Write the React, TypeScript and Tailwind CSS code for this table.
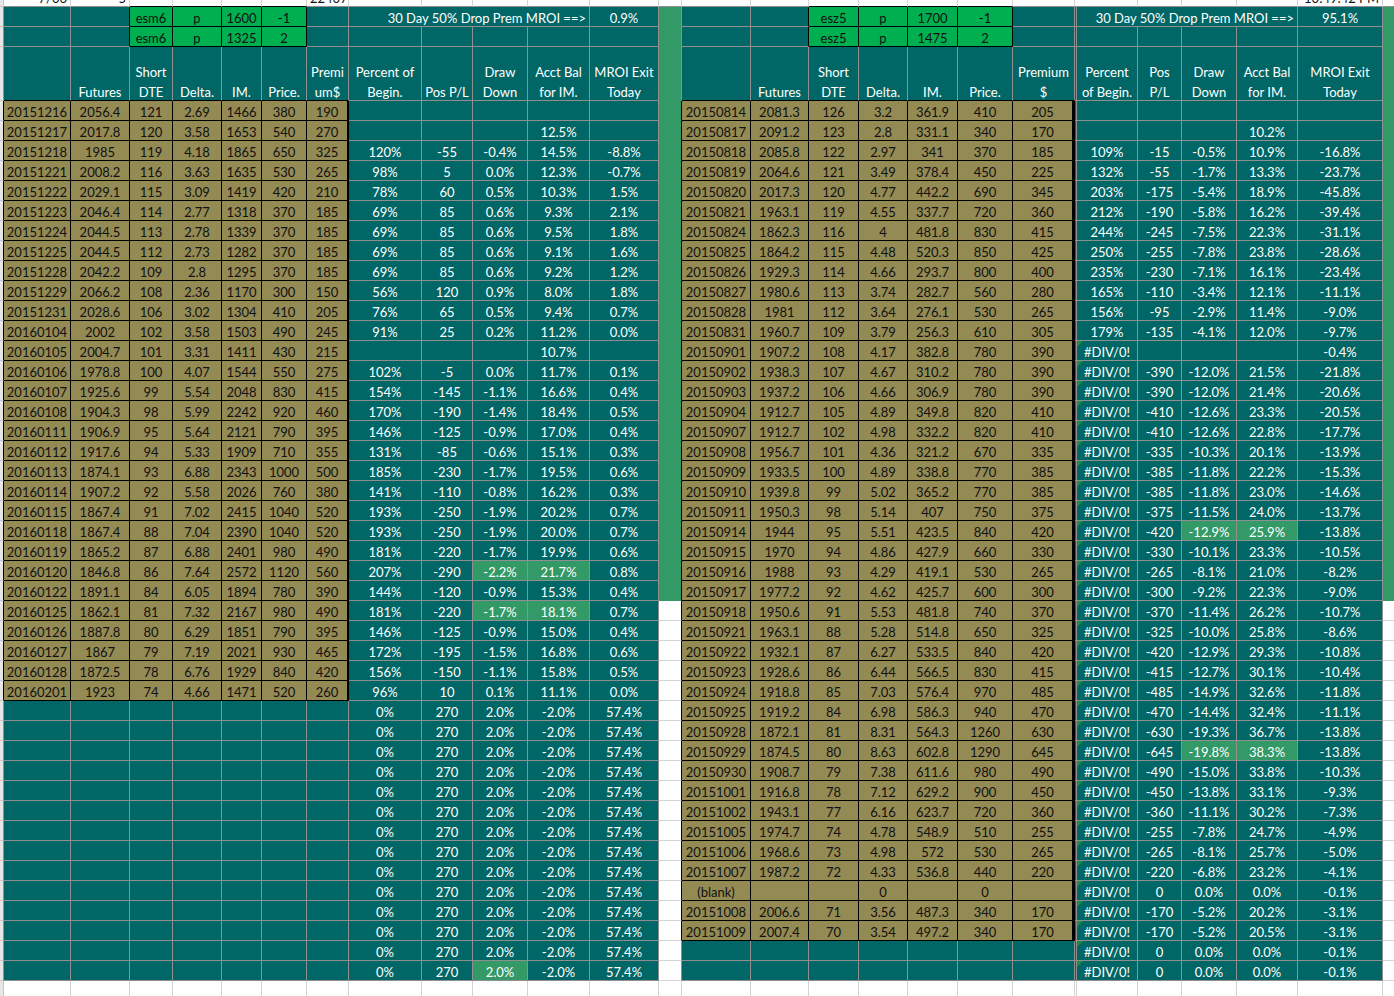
import React from "react";

type C = {
  t?: string;
  bg: string;
  fg?: string;
  br: string;
  bb: string;
  span4?: boolean;
  align?: "c" | "r";
  tri?: boolean;
  hdr?: boolean;
  clip?: boolean;
};

const TEAL = "bg-[#006666]";
const OLIVE = "bg-[#948a54]";
const GREEN = "bg-[#00b050]";
const SEA = "bg-[#339966]";
const WHITE = "bg-white";
const GUT = "bg-[#e6e6e6]";

const BR_G = "border-r border-r-[#8f8f8f]";
const BR_K = "border-r border-r-black";
const BR_K2 = "border-r-2 border-r-black";
const BR_K3 = "border-r-[3px] border-r-black";
const BR_L = "border-r border-r-[#d4d4d4]";
const BR_GUT = "border-r border-r-[#c6c6c6]";
const BB_G = "border-b border-b-[#8f8f8f]";
const BB_K = "border-b border-b-black";
const BB_L = "border-b border-b-[#d4d4d4]";
const BB_SEA = "border-b border-b-[#339966]";
const BB_GUT = "border-b border-b-[#c6c6c6]";

const BLACK = "text-[#111111]";

const LEFT: string[][] = [
  ["20151216", "2056.4", "121", "2.69", "1466", "380", "190"],
  ["20151217", "2017.8", "120", "3.58", "1653", "540", "270"],
  ["20151218", "1985", "119", "4.18", "1865", "650", "325"],
  ["20151221", "2008.2", "116", "3.63", "1635", "530", "265"],
  ["20151222", "2029.1", "115", "3.09", "1419", "420", "210"],
  ["20151223", "2046.4", "114", "2.77", "1318", "370", "185"],
  ["20151224", "2044.5", "113", "2.78", "1339", "370", "185"],
  ["20151225", "2044.5", "112", "2.73", "1282", "370", "185"],
  ["20151228", "2042.2", "109", "2.8", "1295", "370", "185"],
  ["20151229", "2066.2", "108", "2.36", "1170", "300", "150"],
  ["20151231", "2028.6", "106", "3.02", "1304", "410", "205"],
  ["20160104", "2002", "102", "3.58", "1503", "490", "245"],
  ["20160105", "2004.7", "101", "3.31", "1411", "430", "215"],
  ["20160106", "1978.8", "100", "4.07", "1544", "550", "275"],
  ["20160107", "1925.6", "99", "5.54", "2048", "830", "415"],
  ["20160108", "1904.3", "98", "5.99", "2242", "920", "460"],
  ["20160111", "1906.9", "95", "5.64", "2121", "790", "395"],
  ["20160112", "1917.6", "94", "5.33", "1909", "710", "355"],
  ["20160113", "1874.1", "93", "6.88", "2343", "1000", "500"],
  ["20160114", "1907.2", "92", "5.58", "2026", "760", "380"],
  ["20160115", "1867.4", "91", "7.02", "2415", "1040", "520"],
  ["20160118", "1867.4", "88", "7.04", "2390", "1040", "520"],
  ["20160119", "1865.2", "87", "6.88", "2401", "980", "490"],
  ["20160120", "1846.8", "86", "7.64", "2572", "1120", "560"],
  ["20160122", "1891.1", "84", "6.05", "1894", "780", "390"],
  ["20160125", "1862.1", "81", "7.32", "2167", "980", "490"],
  ["20160126", "1887.8", "80", "6.29", "1851", "790", "395"],
  ["20160127", "1867", "79", "7.19", "2021", "930", "465"],
  ["20160128", "1872.5", "78", "6.76", "1929", "840", "420"],
  ["20160201", "1923", "74", "4.66", "1471", "520", "260"],
];

const LM: string[][] = [
  ["", "", "", "", ""],
  ["", "", "", "12.5%", ""],
  ["120%", "-55", "-0.4%", "14.5%", "-8.8%"],
  ["98%", "5", "0.0%", "12.3%", "-0.7%"],
  ["78%", "60", "0.5%", "10.3%", "1.5%"],
  ["69%", "85", "0.6%", "9.3%", "2.1%"],
  ["69%", "85", "0.6%", "9.5%", "1.8%"],
  ["69%", "85", "0.6%", "9.1%", "1.6%"],
  ["69%", "85", "0.6%", "9.2%", "1.2%"],
  ["56%", "120", "0.9%", "8.0%", "1.8%"],
  ["76%", "65", "0.5%", "9.4%", "0.7%"],
  ["91%", "25", "0.2%", "11.2%", "0.0%"],
  ["", "", "", "10.7%", ""],
  ["102%", "-5", "0.0%", "11.7%", "0.1%"],
  ["154%", "-145", "-1.1%", "16.6%", "0.4%"],
  ["170%", "-190", "-1.4%", "18.4%", "0.5%"],
  ["146%", "-125", "-0.9%", "17.0%", "0.4%"],
  ["131%", "-85", "-0.6%", "15.1%", "0.3%"],
  ["185%", "-230", "-1.7%", "19.5%", "0.6%"],
  ["141%", "-110", "-0.8%", "16.2%", "0.3%"],
  ["193%", "-250", "-1.9%", "20.2%", "0.7%"],
  ["193%", "-250", "-1.9%", "20.0%", "0.7%"],
  ["181%", "-220", "-1.7%", "19.9%", "0.6%"],
  ["207%", "-290", "-2.2%", "21.7%", "0.8%"],
  ["144%", "-120", "-0.9%", "15.3%", "0.4%"],
  ["181%", "-220", "-1.7%", "18.1%", "0.7%"],
  ["146%", "-125", "-0.9%", "15.0%", "0.4%"],
  ["172%", "-195", "-1.5%", "16.8%", "0.6%"],
  ["156%", "-150", "-1.1%", "15.8%", "0.5%"],
  ["96%", "10", "0.1%", "11.1%", "0.0%"],
  ...Array.from({ length: 14 }, () => ["0%", "270", "2.0%", "-2.0%", "57.4%"]),
];

const RIGHT: string[][] = [
  ["20150814", "2081.3", "126", "3.2", "361.9", "410", "205"],
  ["20150817", "2091.2", "123", "2.8", "331.1", "340", "170"],
  ["20150818", "2085.8", "122", "2.97", "341", "370", "185"],
  ["20150819", "2064.6", "121", "3.49", "378.4", "450", "225"],
  ["20150820", "2017.3", "120", "4.77", "442.2", "690", "345"],
  ["20150821", "1963.1", "119", "4.55", "337.7", "720", "360"],
  ["20150824", "1862.3", "116", "4", "481.8", "830", "415"],
  ["20150825", "1864.2", "115", "4.48", "520.3", "850", "425"],
  ["20150826", "1929.3", "114", "4.66", "293.7", "800", "400"],
  ["20150827", "1980.6", "113", "3.74", "282.7", "560", "280"],
  ["20150828", "1981", "112", "3.64", "276.1", "530", "265"],
  ["20150831", "1960.7", "109", "3.79", "256.3", "610", "305"],
  ["20150901", "1907.2", "108", "4.17", "382.8", "780", "390"],
  ["20150902", "1938.3", "107", "4.67", "310.2", "780", "390"],
  ["20150903", "1937.2", "106", "4.66", "306.9", "780", "390"],
  ["20150904", "1912.7", "105", "4.89", "349.8", "820", "410"],
  ["20150907", "1912.7", "102", "4.98", "332.2", "820", "410"],
  ["20150908", "1956.7", "101", "4.36", "321.2", "670", "335"],
  ["20150909", "1933.5", "100", "4.89", "338.8", "770", "385"],
  ["20150910", "1939.8", "99", "5.02", "365.2", "770", "385"],
  ["20150911", "1950.3", "98", "5.14", "407", "750", "375"],
  ["20150914", "1944", "95", "5.51", "423.5", "840", "420"],
  ["20150915", "1970", "94", "4.86", "427.9", "660", "330"],
  ["20150916", "1988", "93", "4.29", "419.1", "530", "265"],
  ["20150917", "1977.2", "92", "4.62", "425.7", "600", "300"],
  ["20150918", "1950.6", "91", "5.53", "481.8", "740", "370"],
  ["20150921", "1963.1", "88", "5.28", "514.8", "650", "325"],
  ["20150922", "1932.1", "87", "6.27", "533.5", "840", "420"],
  ["20150923", "1928.6", "86", "6.44", "566.5", "830", "415"],
  ["20150924", "1918.8", "85", "7.03", "576.4", "970", "485"],
  ["20150925", "1919.2", "84", "6.98", "586.3", "940", "470"],
  ["20150928", "1872.1", "81", "8.31", "564.3", "1260", "630"],
  ["20150929", "1874.5", "80", "8.63", "602.8", "1290", "645"],
  ["20150930", "1908.7", "79", "7.38", "611.6", "980", "490"],
  ["20151001", "1916.8", "78", "7.12", "629.2", "900", "450"],
  ["20151002", "1943.1", "77", "6.16", "623.7", "720", "360"],
  ["20151005", "1974.7", "74", "4.78", "548.9", "510", "255"],
  ["20151006", "1968.6", "73", "4.98", "572", "530", "265"],
  ["20151007", "1987.2", "72", "4.33", "536.8", "440", "220"],
  ["(blank)", "", "", "0", "", "0", ""],
  ["20151008", "2006.6", "71", "3.56", "487.3", "340", "170"],
  ["20151009", "2007.4", "70", "3.54", "497.2", "340", "170"],
];

const D = "#DIV/0!";
const RM: string[][] = [
  ["", "", "", "", ""],
  ["", "", "", "10.2%", ""],
  ["109%", "-15", "-0.5%", "10.9%", "-16.8%"],
  ["132%", "-55", "-1.7%", "13.3%", "-23.7%"],
  ["203%", "-175", "-5.4%", "18.9%", "-45.8%"],
  ["212%", "-190", "-5.8%", "16.2%", "-39.4%"],
  ["244%", "-245", "-7.5%", "22.3%", "-31.1%"],
  ["250%", "-255", "-7.8%", "23.8%", "-28.6%"],
  ["235%", "-230", "-7.1%", "16.1%", "-23.4%"],
  ["165%", "-110", "-3.4%", "12.1%", "-11.1%"],
  ["156%", "-95", "-2.9%", "11.4%", "-9.0%"],
  ["179%", "-135", "-4.1%", "12.0%", "-9.7%"],
  [D, "", "", "", "-0.4%"],
  [D, "-390", "-12.0%", "21.5%", "-21.8%"],
  [D, "-390", "-12.0%", "21.4%", "-20.6%"],
  [D, "-410", "-12.6%", "23.3%", "-20.5%"],
  [D, "-410", "-12.6%", "22.8%", "-17.7%"],
  [D, "-335", "-10.3%", "20.1%", "-13.9%"],
  [D, "-385", "-11.8%", "22.2%", "-15.3%"],
  [D, "-385", "-11.8%", "23.0%", "-14.6%"],
  [D, "-375", "-11.5%", "24.0%", "-13.7%"],
  [D, "-420", "-12.9%", "25.9%", "-13.8%"],
  [D, "-330", "-10.1%", "23.3%", "-10.5%"],
  [D, "-265", "-8.1%", "21.0%", "-8.2%"],
  [D, "-300", "-9.2%", "22.3%", "-9.0%"],
  [D, "-370", "-11.4%", "26.2%", "-10.7%"],
  [D, "-325", "-10.0%", "25.8%", "-8.6%"],
  [D, "-420", "-12.9%", "29.3%", "-10.8%"],
  [D, "-415", "-12.7%", "30.1%", "-10.4%"],
  [D, "-485", "-14.9%", "32.6%", "-11.8%"],
  [D, "-470", "-14.4%", "32.4%", "-11.1%"],
  [D, "-630", "-19.3%", "36.7%", "-13.8%"],
  [D, "-645", "-19.8%", "38.3%", "-13.8%"],
  [D, "-490", "-15.0%", "33.8%", "-10.3%"],
  [D, "-450", "-13.8%", "33.1%", "-9.3%"],
  [D, "-360", "-11.1%", "30.2%", "-7.3%"],
  [D, "-255", "-7.8%", "24.7%", "-4.9%"],
  [D, "-265", "-8.1%", "25.7%", "-5.0%"],
  [D, "-220", "-6.8%", "23.2%", "-4.1%"],
  [D, "0", "0.0%", "0.0%", "-0.1%"],
  [D, "-170", "-5.2%", "20.2%", "-3.1%"],
  [D, "-170", "-5.2%", "20.5%", "-3.1%"],
  [D, "0", "0.0%", "0.0%", "-0.1%"],
  [D, "0", "0.0%", "0.0%", "-0.1%"],
];

const HL: Record<number, number[]> = { 23: [10, 11], 25: [10, 11], 43: [10] };
const HR: Record<number, number[]> = { 21: [24, 25], 32: [24, 25] };

const HDR_L = ["", "Futures", "Short\nDTE", "Delta.", "IM.", "Price.", "Premi\num$"];
const HDR_LM = ["Percent of\nBegin.", "Pos P/L", "Draw\nDown", "Acct Bal\nfor IM.", "MROI Exit\nToday"];
const HDR_R = ["", "Futures", "Short\nDTE", "Delta.", "IM.", "Price.", "Premium\n$"];
const HDR_RM = ["Percent\nof Begin.", "Pos\nP/L", "Draw\nDown", "Acct Bal\nfor IM.", "MROI Exit\nToday"];

type Row = { h: string; cells: C[] };

function topRow(): Row {
  const cells: C[] = [];
  for (let k = 0; k < 28; k++) {
    if (k === 0) {
      cells.push({ bg: GUT, br: BR_GUT, bb: BB_GUT });
      continue;
    }
    const black = (k >= 3 && k <= 6) || (k >= 16 && k <= 19);
    const c: C = { bg: WHITE, fg: BLACK, br: k === 27 ? "" : BR_L, bb: black ? BB_K : BB_G, clip: true };
    if (k === 1) { c.t = "7/06"; c.align = "r"; }
    if (k === 2) { c.t = "5"; c.align = "r"; }
    if (k === 7) { c.t = "22407"; }
    if (k === 26) { c.t = "10:49:42 PM"; c.align = "r"; }
    cells.push(c);
  }
  return { h: "h-[7px]", cells };
}

function topBlockRow(r: number): Row {
  const cells: C[] = [];
  const lg = r === 1 ? ["esm6", "p", "1600", "-1"] : ["esm6", "p", "1325", "2"];
  const rg = r === 1 ? ["esz5", "p", "1700", "-1"] : ["esz5", "p", "1475", "2"];
  for (let k = 0; k < 28; k++) {
    if (k === 0) { cells.push({ bg: GUT, br: BR_G, bb: BB_GUT }); continue; }
    if (k === 1 || k === 7 || k === 14 || k === 20 || k === 21) { cells.push({ bg: TEAL, br: BR_G, bb: BB_G }); continue; }
    if (k === 2 || k === 15) { cells.push({ bg: TEAL, br: BR_K, bb: BB_G }); continue; }
    if (k >= 3 && k <= 6) { cells.push({ bg: GREEN, fg: BLACK, br: BR_K, bb: BB_K, t: lg[k - 3] }); continue; }
    if (k >= 16 && k <= 19) { cells.push({ bg: GREEN, fg: BLACK, br: BR_K, bb: BB_K, t: rg[k - 16] }); continue; }
    if (k === 13) { cells.push({ bg: SEA, br: BR_G, bb: BB_SEA }); continue; }
    if (k === 27) { cells.push({ bg: SEA, br: "", bb: BB_SEA }); continue; }
    if (r === 1 && (k === 8 || k === 22)) {
      cells.push({ bg: TEAL, br: BR_G, bb: BB_G, span4: true, align: "r", t: "30 Day 50% Drop Prem MROI ==>" });
      continue;
    }
    if (r === 1 && ((k >= 9 && k <= 11) || (k >= 23 && k <= 25))) continue;
    if (r === 1 && k === 12) { cells.push({ bg: TEAL, br: BR_G, bb: BB_G, t: "0.9%" }); continue; }
    if (r === 1 && k === 26) { cells.push({ bg: TEAL, br: BR_G, bb: BB_G, t: "95.1%" }); continue; }
    cells.push({ bg: TEAL, br: BR_G, bb: BB_G });
  }
  return { h: "h-[20px]", cells };
}

function headerRow(): Row {
  const cells: C[] = [];
  for (let k = 0; k < 28; k++) {
    if (k === 0) { cells.push({ bg: GUT, br: BR_G, bb: BB_GUT }); continue; }
    if (k >= 1 && k <= 7) { cells.push({ bg: TEAL, br: BR_G, bb: BB_K, hdr: true, t: HDR_L[k - 1] }); continue; }
    if (k >= 8 && k <= 12) { cells.push({ bg: TEAL, br: BR_G, bb: BB_G, hdr: true, t: HDR_LM[k - 8] }); continue; }
    if (k === 13) { cells.push({ bg: SEA, br: BR_G, bb: BB_SEA }); continue; }
    if (k >= 14 && k <= 20) { cells.push({ bg: TEAL, br: BR_G, bb: BB_K, hdr: true, t: HDR_R[k - 14] }); continue; }
    if (k === 21) { cells.push({ bg: TEAL, br: BR_G, bb: BB_G }); continue; }
    if (k >= 22 && k <= 26) { cells.push({ bg: TEAL, br: BR_G, bb: BB_G, hdr: true, t: HDR_RM[k - 22] }); continue; }
    cells.push({ bg: SEA, br: "", bb: BB_SEA });
  }
  return { h: "h-[54px]", cells };
}

function dataRow(i: number): Row {
  const cells: C[] = [];
  const lOlive = i < 30;
  const rOlive = i < 42;
  for (let k = 0; k < 28; k++) {
    if (k === 0) {
      cells.push({ bg: GUT, br: lOlive ? BR_K : BR_G, bb: BB_GUT });
      continue;
    }
    if (k >= 1 && k <= 7) {
      if (lOlive) cells.push({ bg: OLIVE, fg: BLACK, br: k === 7 ? BR_K2 : BR_K, bb: BB_K, t: LEFT[i][k - 1] });
      else cells.push({ bg: TEAL, br: BR_G, bb: BB_G });
      continue;
    }
    if (k >= 8 && k <= 12) {
      const hl = (HL[i] || []).includes(k);
      cells.push({ bg: hl ? SEA : TEAL, br: BR_G, bb: BB_G, t: LM[i][k - 8] });
      continue;
    }
    if (k === 13) {
      if (i < 25) cells.push({ bg: SEA, br: rOlive ? BR_K : BR_G, bb: BB_SEA });
      else cells.push({ bg: WHITE, br: rOlive ? BR_K : BR_G, bb: BB_L });
      continue;
    }
    if (k >= 14 && k <= 20) {
      if (rOlive) cells.push({ bg: OLIVE, fg: BLACK, br: k === 20 ? BR_K3 : BR_K, bb: BB_K, t: RIGHT[i][k - 14] });
      else cells.push({ bg: TEAL, br: BR_G, bb: BB_G });
      continue;
    }
    if (k === 21) { cells.push({ bg: TEAL, br: BR_G, bb: BB_G }); continue; }
    if (k >= 22 && k <= 26) {
      const hl = (HR[i] || []).includes(k);
      const t = RM[i][k - 22];
      cells.push({ bg: hl ? SEA : TEAL, br: BR_G, bb: BB_G, t, tri: k === 22 && t === D });
      continue;
    }
    if (i < 25) cells.push({ bg: SEA, br: "", bb: BB_SEA });
    else cells.push({ bg: WHITE, br: "", bb: BB_L });
  }
  return { h: "h-[20px]", cells };
}

function bottomRow(): Row {
  const cells: C[] = [];
  for (let k = 0; k < 28; k++) {
    if (k === 0) cells.push({ bg: GUT, br: BR_GUT, bb: "" });
    else cells.push({ bg: WHITE, br: k === 27 ? "" : BR_L, bb: "" });
  }
  return { h: "h-[15px]", cells };
}

function Cell({ c, h }: { c: C; h: string }) {
  const fg = c.fg ?? "text-white";
  const span = c.span4 ? "col-span-4" : "";
  if (c.hdr) {
    return (
      <div className={`${c.bg} ${fg} ${c.br} ${c.bb} ${h} flex flex-col justify-end items-center text-center overflow-hidden`}>
        <div className="leading-[20px] whitespace-pre-line -mb-[2px]">{c.t}</div>
      </div>
    );
  }
  if (c.clip) {
    const just = c.align === "r" ? "justify-end pr-[3px]" : "justify-start pl-[3px]";
    return (
      <div className={`${c.bg} ${fg} ${c.br} ${c.bb} ${h} flex items-start ${just} overflow-hidden whitespace-nowrap`}>
        <div className="-mt-[12px] leading-[20px]">{c.t}</div>
      </div>
    );
  }
  const just = c.align === "r" ? "justify-end pr-[3px]" : "justify-center";
  return (
    <div className={`${c.bg} ${fg} ${c.br} ${c.bb} ${h} ${span} relative flex items-center ${just} overflow-hidden whitespace-nowrap leading-[20px] pt-[2px]`}>
      {c.tri && (
        <div className="absolute left-0 top-0 w-0 h-0 border-t-[6px] border-t-[#1f8f3f] border-r-[6px] border-r-transparent" />
      )}
      {c.t}
    </div>
  );
}

export default function App() {
  const rows: Row[] = [
    topRow(),
    topBlockRow(1),
    topBlockRow(2),
    headerRow(),
    ...Array.from({ length: 44 }, (_, i) => dataRow(i)),
    bottomRow(),
  ];
  return (
    <div className="w-[1394px] h-[996px] overflow-hidden bg-white font-['Lato',sans-serif] text-[13px]">
      <div className="grid grid-cols-[4px_67px_59px_43px_49px_40px_45px_42px_73px_51px_55px_62px_69px_23px_69px_58px_50px_49px_50px_55px_62px_2px_61px_44px_55px_61px_85px_11px]">
        {rows.map((r, ri) =>
          r.cells.map((c, ci) => <Cell key={`${ri}-${ci}`} c={c} h={r.h} />)
        )}
      </div>
    </div>
  );
}
